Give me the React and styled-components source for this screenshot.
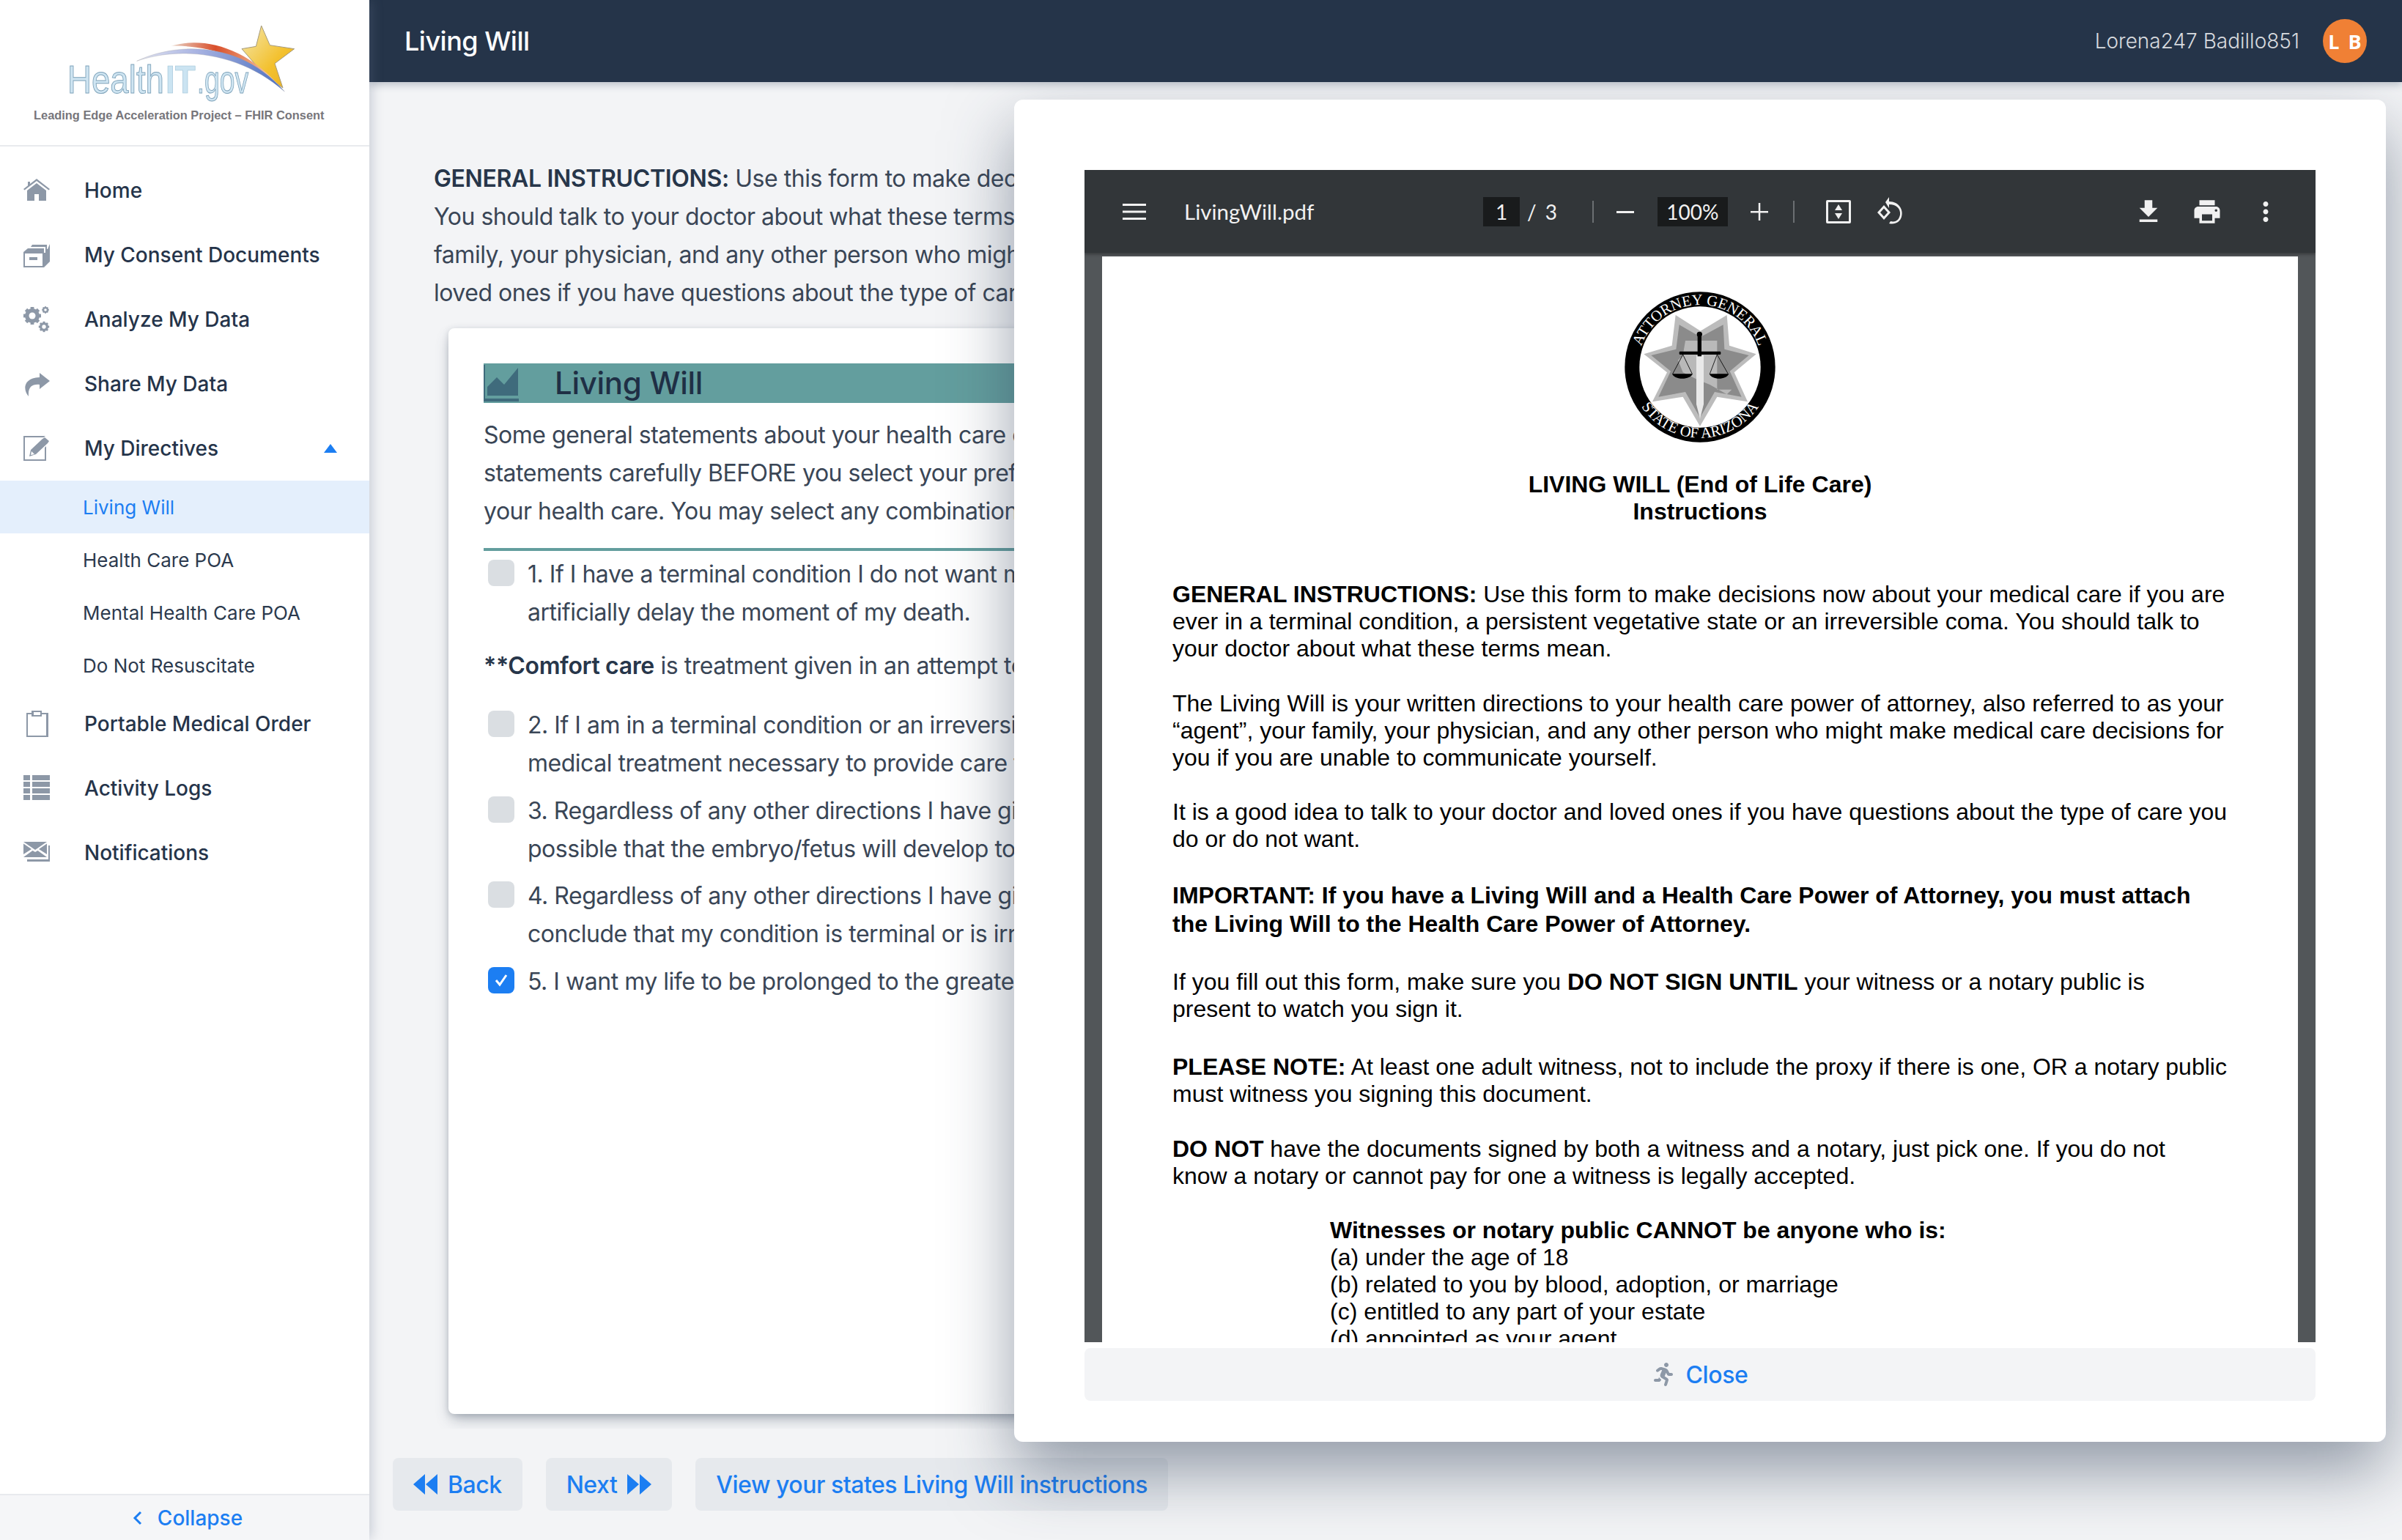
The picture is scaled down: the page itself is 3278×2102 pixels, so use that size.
import React from 'react';
import styled, { createGlobalStyle } from 'styled-components';
import { FaRunning } from 'react-icons/fa';

const GlobalStyle = createGlobalStyle`
	html, body {
		margin: 0;
		padding: 0;
		height: 100%;
		background: #f3f4f6;
		font-family: Inter, "Liberation Sans", sans-serif;
	}
	* {
		box-sizing: border-box;
	}
`;

const Page = styled.div`
	display: flex;
	width: 3278px;
	height: 2102px;
	overflow: hidden;
	background: #f3f4f6;
`;

const Sidebar = styled.aside`
	position: relative;
	z-index: 4;
	display: flex;
	flex-direction: column;
	flex: 0 0 504px;
	height: 100%;
	background: white;
	box-shadow: 6px 0 14px -2px rgba(100, 116, 139, 0.28);
`;

const LogoBlock = styled.div`
	display: flex;
	flex-direction: column;
	flex: 0 0 200px;
	padding: 20px 0 0 70px;
	border-bottom: 2px solid #e8eaee;
`;

const LogoImage = styled.svg`
	display: block;
	width: 360px;
	height: 124px;
	filter: blur(0.7px);
`;

const LogoCaption = styled.div`
	margin: 2px 0 0 -24px;
	font-family: "Liberation Sans", sans-serif;
	font-size: 16.4px;
	line-height: 22px;
	font-weight: 700;
	color: #77767b;
	white-space: nowrap;
`;

const Nav = styled.nav`
	display: flex;
	flex-direction: column;
	flex: 1;
	padding-top: 16px;
`;

const NavItem = styled.div`
	display: flex;
	align-items: center;
	height: 88px;
	padding: 0 44px 0 32px;
	font-size: 28px;
	font-weight: 500;
	color: #25344a;
`;

const NavIcon = styled.svg`
	flex: 0 0 36px;
	width: 36px;
	height: 36px;
	margin-right: 47px;
	fill: #8d98a7;
`;

const Caret = styled.span`
	margin-left: auto;
	border-left: 9px solid transparent;
	border-right: 9px solid transparent;
	border-bottom: 12px solid #1c7ef2;
`;

const SubItem = styled.div`
	display: flex;
	align-items: center;
	height: 72px;
	padding-left: 113px;
	font-size: 26px;
	background: ${(p) => (p.$active ? '#e4effc' : 'transparent')};
	color: ${(p) => (p.$active ? '#1c7ef2' : '#2c3a4e')};
`;

const CollapseBar = styled.div`
	display: flex;
	align-items: center;
	justify-content: center;
	gap: 20px;
	flex: 0 0 63px;
	padding-left: 8px;
	border-top: 2px solid #e8eaee;
	background: #f5f6f8;
	color: #1c7ef2;
	font-size: 28px;
	font-weight: 500;
`;

const Content = styled.div`
	display: flex;
	flex-direction: column;
	flex: 1;
	min-width: 0;
`;

const TopBar = styled.header`
	position: relative;
	z-index: 3;
	display: flex;
	align-items: center;
	flex: 0 0 112px;
	padding: 0 48px;
	background: #253449;
	box-shadow: 0 4px 10px rgba(60, 75, 100, 0.3);
`;

const PageTitle = styled.h1`
	margin: 0;
	font-size: 36px;
	font-weight: 500;
	letter-spacing: -0.5px;
	color: white;
`;

const UserName = styled.span`
	margin-left: auto;
	margin-right: 32px;
	font-size: 28px;
	font-weight: 300;
	color: #d7dadf;
`;

const Avatar = styled.span`
	display: flex;
	align-items: center;
	justify-content: center;
	gap: 12px;
	width: 60px;
	height: 60px;
	border-radius: 50%;
	background: #f08035;
	color: white;
	font-family: "Open Sans", sans-serif;
	font-size: 27px;
	font-weight: 700;
`;

const Main = styled.main`
	position: relative;
	display: flex;
	flex-direction: column;
	flex: 1;
	min-height: 0;
	overflow: hidden;
`;

const FormArea = styled.div`
	flex: 0 0 1838px;
	padding: 106px 64px 0 88px;
	overflow: hidden;
`;

const Lines = styled.p`
	margin: 0;
	font-size: 32px;
	line-height: 52px;
	letter-spacing: -0.48px;
	color: #3a4656;
	white-space: nowrap;

	strong {
		font-weight: 600;
		letter-spacing: -0.36px;
		color: #27364a;
	}
`;

const Card = styled.section`
	height: 1482px;
	margin: 22px 0 0 20px;
	padding: 48px;
	border-radius: 8px;
	background: white;
	box-shadow: 0 10px 20px -4px rgba(71, 85, 105, 0.42), 0 2px 8px 0 rgba(71, 85, 105, 0.22);
`;

const CardHeading = styled.div`
	display: flex;
	align-items: center;
	height: 54px;
	background: #639e9e;
`;

const HeadingIcon = styled.svg`
	flex: 0 0 48px;
	width: 48px;
	height: 54px;
	fill: #3f6b7c;
`;

const HeadingText = styled.h2`
	margin: 0 0 0 49px;
	font-size: 42px;
	line-height: 54px;
	font-weight: 500;
	letter-spacing: -0.3px;
	color: #1f2f45;
`;

const CardIntro = styled(Lines)`
	margin-top: 18px;
	padding-bottom: 24px;
	border-bottom: 4px solid #639e9e;
`;

const Choice = styled.div`
	display: flex;
	align-items: flex-start;
	margin-top: ${(p) => p.$top}px;
`;

const CheckBox = styled.span`
	display: flex;
	align-items: center;
	justify-content: center;
	flex: 0 0 36px;
	width: 36px;
	height: 36px;
	margin: 8px 18px 0 6px;
	border-radius: 8px;
	background: ${(p) => (p.$checked ? '#1c7ef2' : '#dadee2')};
`;

const ChoiceText = styled(Lines)`
	margin-top: 2px;
`;

const Note = styled(Lines)`
	margin-top: 21px;
`;

const Footer = styled.footer`
	display: flex;
	align-items: flex-start;
	gap: 32px;
	flex: 1;
	padding: 40px 0 0 32px;
`;

const ActionButton = styled.button`
	display: flex;
	align-items: center;
	gap: 14px;
	height: 72px;
	padding: 0 28px;
	border: 0;
	border-radius: 8px;
	background: #e6e9ed;
	color: #1c7ef2;
	font-family: inherit;
	font-size: 32px;
	font-weight: 500;
	letter-spacing: -0.48px;
`;

const ArrowIcon = styled.svg`
	width: 33px;
	height: 28px;
	fill: #1c7ef2;
`;

const Modal = styled.div`
	position: absolute;
	z-index: 2;
	top: 24px;
	left: 880px;
	display: flex;
	flex-direction: column;
	width: 1872px;
	height: 1832px;
	padding: 96px 96px 0;
	border-radius: 12px;
	background: white;
	box-shadow: 0 40px 90px rgba(50, 65, 90, 0.5);
`;

const Viewer = styled.div`
	display: flex;
	flex-direction: column;
	flex: 0 0 1600px;
	overflow: hidden;
	background: #525659;
`;

const PdfToolbar = styled.div`
	position: relative;
	display: flex;
	align-items: center;
	flex: 0 0 113px;
	background: #323639;
	color: #f1f1f1;
	box-shadow: 0 2px 4px rgba(0, 0, 0, 0.35);
`;

const PdfName = styled.span`
	flex: 0 0 408px;
	margin-left: 52px;
	font-family: Lato, sans-serif;
	font-size: 29.5px;
`;

const PdfBox = styled.span`
	display: flex;
	align-items: center;
	justify-content: center;
	width: ${(p) => p.$width}px;
	height: 40px;
	margin-left: ${(p) => p.$left || 0}px;
	background: #191b1c;
	font-family: Lato, sans-serif;
	font-size: 28px;
`;

const PdfText = styled.span`
	font-family: Lato, sans-serif;
	font-size: 28px;
	margin-left: ${(p) => p.$left}px;
`;

const Divider = styled.span`
	width: 2px;
	height: 30px;
	margin-left: ${(p) => p.$left}px;
	background: #6b6f72;
`;

const ToolIcon = styled.svg`
	flex: none;
	width: ${(p) => p.$size || 42}px;
	height: ${(p) => p.$size || 42}px;
	margin-left: ${(p) => p.$left}px;
	fill: #f1f1f1;
`;

const PdfSheet = styled.div`
	flex: 1;
	min-height: 0;
	margin: 5px 24px 0;
	padding: 35px 96px 0;
	overflow: hidden;
	background: white;
	font-family: "Liberation Sans", Arial, sans-serif;
	font-size: 32px;
	line-height: 37px;
	color: black;
`;

const Seal = styled.svg`
	display: block;
	width: 240px;
	height: 230px;
	margin: 0 auto;
`;

const SheetTitle = styled.div`
	margin-top: 28px;
	text-align: center;
	font-weight: 700;
`;

const SheetPara = styled.p`
	margin: ${(p) => p.$top}px 0 0 ${(p) => p.$indent || 0}px;
	line-height: ${(p) => p.$line || 37}px;
	white-space: nowrap;
`;

const CloseBar = styled.button`
	display: flex;
	align-items: center;
	justify-content: center;
	gap: 14px;
	flex: 0 0 72px;
	margin-top: 8px;
	border: 0;
	border-radius: 8px;
	background: #f3f4f6;
	color: #1c7ef2;
	font-family: inherit;
	font-size: 32px;
	font-weight: 500;
	letter-spacing: -0.36px;

	svg {
		width: 32px;
		height: 32px;
		fill: #8d98a7;
	}
`;

const HomeIcon = () => (
	<NavIcon viewBox="0 0 36 36">
		<path d="M0 16 L18 2 L36 16 L34.5 17.5 L18 5 L1.5 17.5Z" />
		<path d="M6 6h3v4l-3 2.500Z" />
		<path d="M18 8 L31 18 V32 H21 V23 H15 V32 H5 V18Z" />
	</NavIcon>
);

const BoxIcon = () => (
	<NavIcon viewBox="0 0 36 36">
		<path d="M0 14 L6 9 H28 V15 H30 V7 H10 L12 4 H32 V10 H33 L36 3 V27 L28 35 H0Z M2 16 V33 H26 V16Z" fillRule="evenodd" />
		<path d="M8 21h11v4H8z" />
	</NavIcon>
);

const GearShape = ({ x, y, r }) => (
	<g transform={`translate(${x} ${y})`}>
		{[0, 45, 90, 135].map((a) => (
			<rect key={a} x={-r * 0.24} y={-r * 1.2} width={r * 0.48} height={r * 2.4} transform={`rotate(${a})`} />
		))}
		<circle r={r} />
		<circle r={r * 0.45} fill="white" />
	</g>
);

const GearsIcon = () => (
	<NavIcon viewBox="0 0 36 36">
		<GearShape x={12} y={13} r={10} />
		<GearShape x={30} y={5} r={4} />
		<GearShape x={28} y={28} r={6} />
	</NavIcon>
);

const ShareIcon = () => (
	<NavIcon viewBox="0 0 36 36">
		<path d="M22 3 L36 14 L22 25 V19 C12 18 6 22 7 35 C0 28 -2 10 22 9Z" />
	</NavIcon>
);

const EditIcon = () => (
	<NavIcon viewBox="0 0 36 36">
		<path d="M0 1 H30 L27.500 3 H2 V33 H29 V17 L31 15 V35 H0Z" />
		<path d="M8 29 L10 20 L26 5 L29 3 L35 8 L33 11 L17 26Z M11 22 L10 27 L15 26Z" fillRule="evenodd" />
	</NavIcon>
);

const ClipboardIcon = () => (
	<NavIcon viewBox="0 0 36 36">
		<path d="M4 3 H11 V0 H25 V3 H34 V36 H4Z M6 5 V34 H31 V5 H25 V8 H11 V5Z M14 2 V6 H23 V2Z" fillRule="evenodd" />
	</NavIcon>
);

const ListIcon = () => (
	<NavIcon viewBox="0 0 36 36">
		<path d="M0 0h9v7H0zM12 0h24v7H12zM0 9h9v7H0zM12 9h24v7H12zM0 18h9v7H0zM12 18h24v7H12zM0 27h9v7H0zM12 27h24v7H12z" />
	</NavIcon>
);

const MailIcon = () => (
	<NavIcon viewBox="0 0 36 36">
		<path d="M0 3 H32 L16 14Z" />
		<path d="M0 5.500 L11 13 L0 20Z M32 5.500 V20 L21 13Z" />
		<path d="M0 24 L12.500 15 L16 17 L19.500 15 L32 24Z" />
		<path d="M34 8 H36 V30 H5 V27 H34Z" />
	</NavIcon>
);

const LogoArt = () => (
	<LogoImage viewBox="0 0 1080 372">
		<defs>
			<linearGradient id="starFill" x1="0" y1="0" x2="1" y2="1">
				<stop offset="0" stopColor="#f4e7ae" />
				<stop offset="0.6" stopColor="#f3c12f" />
				<stop offset="1" stopColor="#e9b021" />
			</linearGradient>
			<linearGradient id="redArc" x1="0" y1="0" x2="1" y2="0">
				<stop offset="0" stopColor="#e8d5c8" />
				<stop offset="0.4" stopColor="#d94f2b" />
				<stop offset="0.75" stopColor="#eca27e" />
				<stop offset="1" stopColor="#f3e2d0" />
			</linearGradient>
			<linearGradient id="blueArc" x1="0" y1="0" x2="1" y2="0">
				<stop offset="0" stopColor="#e4e6f2" />
				<stop offset="0.4" stopColor="#a9b4e2" />
				<stop offset="1" stopColor="#4b6fc0" />
			</linearGradient>
		</defs>
		<text x="66" y="322" fontFamily="Liberation Sans" fontSize="160" textLength="396" lengthAdjust="spacingAndGlyphs" fill="#cfe5f2" stroke="#7fa3ba" strokeWidth="3">Health</text>
		<text x="468" y="322" fontFamily="Liberation Sans" fontWeight="700" fontSize="160" textLength="122" lengthAdjust="spacingAndGlyphs" fill="#cbe4f2" stroke="#9fc2d6" strokeWidth="2">IT</text>
		<text x="596" y="322" fontFamily="Liberation Sans" fontSize="160" textLength="212" lengthAdjust="spacingAndGlyphs" fill="#cfe5f2" stroke="#7fa3ba" strokeWidth="3">.gov</text>
		<path d="M860 45 L895 125 L995 140 L915 200 L948 300 L862 235 L780 140 L838 130Z" fill="url(#starFill)" stroke="#a59a7c" strokeWidth="3" />
		<path d="M490 128 C620 90 800 130 945 305 C800 170 640 125 490 128Z" fill="url(#redArc)" />
		<path d="M350 190 C520 110 780 110 955 315 C780 160 540 125 350 190Z" fill="url(#blueArc)" stroke="#9a9aa2" strokeWidth="1" />
	</LogoImage>
);

const SealArt = () => (
	<Seal viewBox="0 0 720 690">
		<defs>
			<path id="sealTop" d="M 105 348 A 255 255 0 0 1 615 348" />
			<path id="sealBottom" d="M 70 348 A 290 290 0 0 0 650 348" />
		</defs>
		<circle cx="360" cy="348" r="308" fill="black" />
		<circle cx="360" cy="348" r="248" fill="white" />
		<polygon points="260,135 362,200 470,135 480,260 590,295 500,370 555,490 430,470 360,590 290,470 165,490 225,370 130,295 245,260" fill="#bcbcbc" />
		<polygon points="275,175 362,225 455,175 460,275 560,300 482,365 530,470 420,450 360,555 300,450 190,470 240,365 160,300 262,275" fill="#8b8b8b" />
		<polygon points="300,240 430,240 430,440 490,440 470,460 400,420 350,400 290,370 270,320 290,300" fill="#b9b9b9" />
		<polygon points="345,300 375,300 375,500 360,560 345,500" fill="#e9e9e9" />
		<circle cx="358" cy="214" r="11" fill="black" />
		<rect x="350" y="214" width="16" height="90" fill="black" />
		<rect x="275" y="284" width="170" height="13" rx="4" fill="black" />
		<g fill="none" stroke="black" strokeWidth="2.500">
			<path d="M290 297 L248 376 M290 297 L328 376 M430 297 L400 376 M430 297 L475 376" />
		</g>
		<path d="M246 376 H330 C320 402 256 402 246 376Z M398 376 H478 C468 402 408 402 398 376Z" fill="black" />
		<text fontFamily="Liberation Serif" fontSize="62" fill="white">
			<textPath href="#sealTop" startOffset="50%" textAnchor="middle">ATTORNEY GENERAL</textPath>
		</text>
		<text fontFamily="Liberation Serif" fontSize="62" fill="white">
			<textPath href="#sealBottom" startOffset="50%" textAnchor="middle">STATE OF ARIZONA</textPath>
		</text>
	</Seal>
);

const navTop = [
	['Home', HomeIcon],
	['My Consent Documents', BoxIcon],
	['Analyze My Data', GearsIcon],
	['Share My Data', ShareIcon],
];

const navBottom = [
	['Portable Medical Order', ClipboardIcon],
	['Activity Logs', ListIcon],
	['Notifications', MailIcon],
];

const SideMenu = () => (
	<Sidebar>
		<LogoBlock>
			<LogoArt />
			<LogoCaption>Leading Edge Acceleration Project – FHIR Consent</LogoCaption>
		</LogoBlock>
		<Nav>
			{navTop.map(([label, Icon]) => (
				<NavItem key={label}><Icon />{label}</NavItem>
			))}
			<NavItem>
				<EditIcon />My Directives<Caret />
			</NavItem>
			<SubItem $active>Living Will</SubItem>
			<SubItem>Health Care POA</SubItem>
			<SubItem>Mental Health Care POA</SubItem>
			<SubItem>Do Not Resuscitate</SubItem>
			{navBottom.map(([label, Icon]) => (
				<NavItem key={label}><Icon />{label}</NavItem>
			))}
		</Nav>
		<CollapseBar>
			<svg width="14" height="20" viewBox="0 0 14 20"><path d="M11 2 L3 10 L11 18" fill="none" stroke="#1c7ef2" strokeWidth="3" /></svg>
			Collapse
		</CollapseBar>
	</Sidebar>
);

const choices = [
	{ top: 4, checked: false, lines: ['1. If I have a terminal condition I do not want my', 'artificially delay the moment of my death.'] },
	{ top: 27, checked: false, lines: ['2. If I am in a terminal condition or an irreversible', 'medical treatment necessary to provide care to'] },
	{ top: 11, checked: false, lines: ['3. Regardless of any other directions I have given', 'possible that the embryo/fetus will develop to'] },
	{ top: 10, checked: false, lines: ['4. Regardless of any other directions I have given', 'conclude that my condition is terminal or is irreversible'] },
	{ top: 11, checked: true, lines: ['5. I want my life to be prolonged to the greatest'] },
];

const ChoiceRow = ({ choice }) => (
	<Choice $top={choice.top}>
		<CheckBox $checked={choice.checked}>
			{choice.checked && (
				<svg width="20" height="20" viewBox="0 0 20 20"><path d="M3 10 L8 16 L17 3" fill="none" stroke="white" strokeWidth="3" /></svg>
			)}
		</CheckBox>
		<ChoiceText>
			{choice.lines.map((line) => (
				<React.Fragment key={line}>{line}<br /></React.Fragment>
			))}
		</ChoiceText>
	</Choice>
);

const FormCard = () => (
	<Card>
		<CardHeading>
			<HeadingIcon viewBox="0 0 48 54">
				<path d="M5 44 V32 L18 19 L28 29 L47 6 V44Z" />
				<path d="M0 2h2v46h46v4H0z" />
			</HeadingIcon>
			<HeadingText>Living Will</HeadingText>
		</CardHeading>
		<CardIntro>
			Some general statements about your health care choices<br />
			statements carefully BEFORE you select your preference<br />
			your health care. You may select any combination of
		</CardIntro>
		<ChoiceRow choice={choices[0]} />
		<Note><strong>**Comfort care</strong> is treatment given in an attempt to</Note>
		{choices.slice(1).map((choice) => (
			<ChoiceRow key={choice.lines[0]} choice={choice} />
		))}
	</Card>
);

const PdfBar = () => (
	<PdfToolbar>
		<ToolIcon $left={52} $size={32} viewBox="0 0 32 32">
			<path d="M0 5h32v3H0zM0 14.500h32v3H0zM0 24h32v3H0z" />
		</ToolIcon>
		<PdfName>LivingWill.pdf</PdfName>
		<PdfBox $width={50}>1</PdfBox>
		<PdfText $left={10}>/</PdfText>
		<PdfText $left={12}>3</PdfText>
		<Divider $left={48} />
		<ToolIcon $left={31} $size={24} viewBox="0 0 24 24"><path d="M0 11h24v3H0z" /></ToolIcon>
		<PdfBox $width={96} $left={32}>100%</PdfBox>
		<ToolIcon $left={31} $size={24} viewBox="0 0 24 24"><path d="M0 11h24v2.500H0zM10.800 0h2.500v24h-2.500z" /></ToolIcon>
		<Divider $left={34} />
		<ToolIcon $left={41} $size={38} viewBox="0 0 38 38">
			<path d="M4 3h30a2 2 0 0 1 2 2v28a2 2 0 0 1-2 2H4a2 2 0 0 1-2-2V5a2 2 0 0 1 2-2zm1 3v26h28V6z" fillRule="evenodd" />
			<path d="M19 9l5 8H14zM19 29l-5-8h10z" />
		</ToolIcon>
		<ToolIcon $left={30} $size={40} viewBox="0 0 40 40">
			<path d="M13 11 L22 21 L13 31 L4 21Z M13 15.500 L8 21 L13 26.500 L18 21Z" fillRule="evenodd" />
			<path d="M20 0 V6 C34 6 40 18 37 27 C35 34 28 38 20 36 L22 33 C30 35 34 30 35 24 C36 16 30 10 20 10 V15 L15 7Z" />
		</ToolIcon>
		<ToolIcon $left={313} viewBox="0 0 24 24"><path d="M19 9h-4V3H9v6H5l7 7 7-7zM5 18v2h14v-2H5z" /></ToolIcon>
		<ToolIcon $left={38} viewBox="0 0 24 24"><path d="M19 8H5c-1.660 0-3 1.340-3 3v6h4v4h12v-4h4v-6c0-1.660-1.340-3-3-3zm-3 11H8v-5h8v5zm3-7c-.55 0-1-.45-1-1s.45-1 1-1 1 .45 1 1-.45 1-1 1zm-1-9H6v4h12V3z" /></ToolIcon>
		<ToolIcon $left={38} viewBox="0 0 24 24"><path d="M12 8c1.100 0 2-.9 2-2s-.9-2-2-2-2 .9-2 2 .9 2 2 2zm0 2c-1.100 0-2 .9-2 2s.9 2 2 2 2-.9 2-2-.9-2-2-2zm0 6c-1.100 0-2 .9-2 2s.9 2 2 2 2-.9 2-2-.9-2-2-2z" /></ToolIcon>
	</PdfToolbar>
);

const PdfPage = () => (
	<PdfSheet>
		<SealArt />
		<SheetTitle>LIVING WILL (End of Life Care)<br />Instructions</SheetTitle>
		<SheetPara $top={76}>
			<strong>GENERAL INSTRUCTIONS:</strong> Use this form to make decisions now about your medical care if you are<br />
			ever in a terminal condition, a persistent vegetative state or an irreversible coma. You should talk to<br />
			your doctor about what these terms mean.
		</SheetPara>
		<SheetPara $top={38}>
			The Living Will is your written directions to your health care power of attorney, also referred to as your<br />
			“agent”, your family, your physician, and any other person who might make medical care decisions for<br />
			you if you are unable to communicate yourself.
		</SheetPara>
		<SheetPara $top={37}>
			It is a good idea to talk to your doctor and loved ones if you have questions about the type of care you<br />
			do or do not want.
		</SheetPara>
		<SheetPara $top={39} $line={39}>
			<strong>IMPORTANT: If you have a Living Will and a Health Care Power of Attorney, you must attach<br />
			the Living Will to the Health Care Power of Attorney.</strong>
		</SheetPara>
		<SheetPara $top={41}>
			If you fill out this form, make sure you <strong>DO NOT SIGN UNTIL</strong> your witness or a notary public is<br />
			present to watch you sign it.
		</SheetPara>
		<SheetPara $top={42}>
			<strong>PLEASE NOTE:</strong> At least one adult witness, not to include the proxy if there is one, OR a notary public<br />
			must witness you signing this document.
		</SheetPara>
		<SheetPara $top={38}>
			<strong>DO NOT</strong> have the documents signed by both a witness and a notary, just pick one. If you do not<br />
			know a notary or cannot pay for one a witness is legally accepted.
		</SheetPara>
		<SheetPara $top={37} $indent={215}>
			<strong>Witnesses or notary public CANNOT be anyone who is:</strong><br />
			(a) under the age of 18<br />
			(b) related to you by blood, adoption, or marriage<br />
			(c) entitled to any part of your estate<br />
			(d) appointed as your agent
		</SheetPara>
	</PdfSheet>
);

const App = () => (
	<Page>
		<GlobalStyle />
		<SideMenu />
		<Content>
			<TopBar>
				<PageTitle>Living Will</PageTitle>
				<UserName>Lorena247 Badillo851</UserName>
				<Avatar><span>L</span><span>B</span></Avatar>
			</TopBar>
			<Main>
				<FormArea>
					<Lines>
						<strong>GENERAL INSTRUCTIONS:</strong> Use this form to make decisions<br />
						You should talk to your doctor about what these terms mean<br />
						family, your physician, and any other person who might make<br />
						loved ones if you have questions about the type of care you
					</Lines>
					<FormCard />
				</FormArea>
				<Footer>
					<ActionButton>
						<ArrowIcon viewBox="0 0 33 28"><path d="M16 0v28L0 14zM33 0v28L17 14z" /></ArrowIcon>
						Back
					</ActionButton>
					<ActionButton>
						Next
						<ArrowIcon viewBox="0 0 33 28"><path d="M0 0v28l16-14zM17 0v28l16-14z" /></ArrowIcon>
					</ActionButton>
					<ActionButton>View your states Living Will instructions</ActionButton>
				</Footer>
				<Modal>
					<Viewer>
						<PdfBar />
						<PdfPage />
					</Viewer>
					<CloseBar><FaRunning />Close</CloseBar>
				</Modal>
			</Main>
		</Content>
	</Page>
);

export default App;
